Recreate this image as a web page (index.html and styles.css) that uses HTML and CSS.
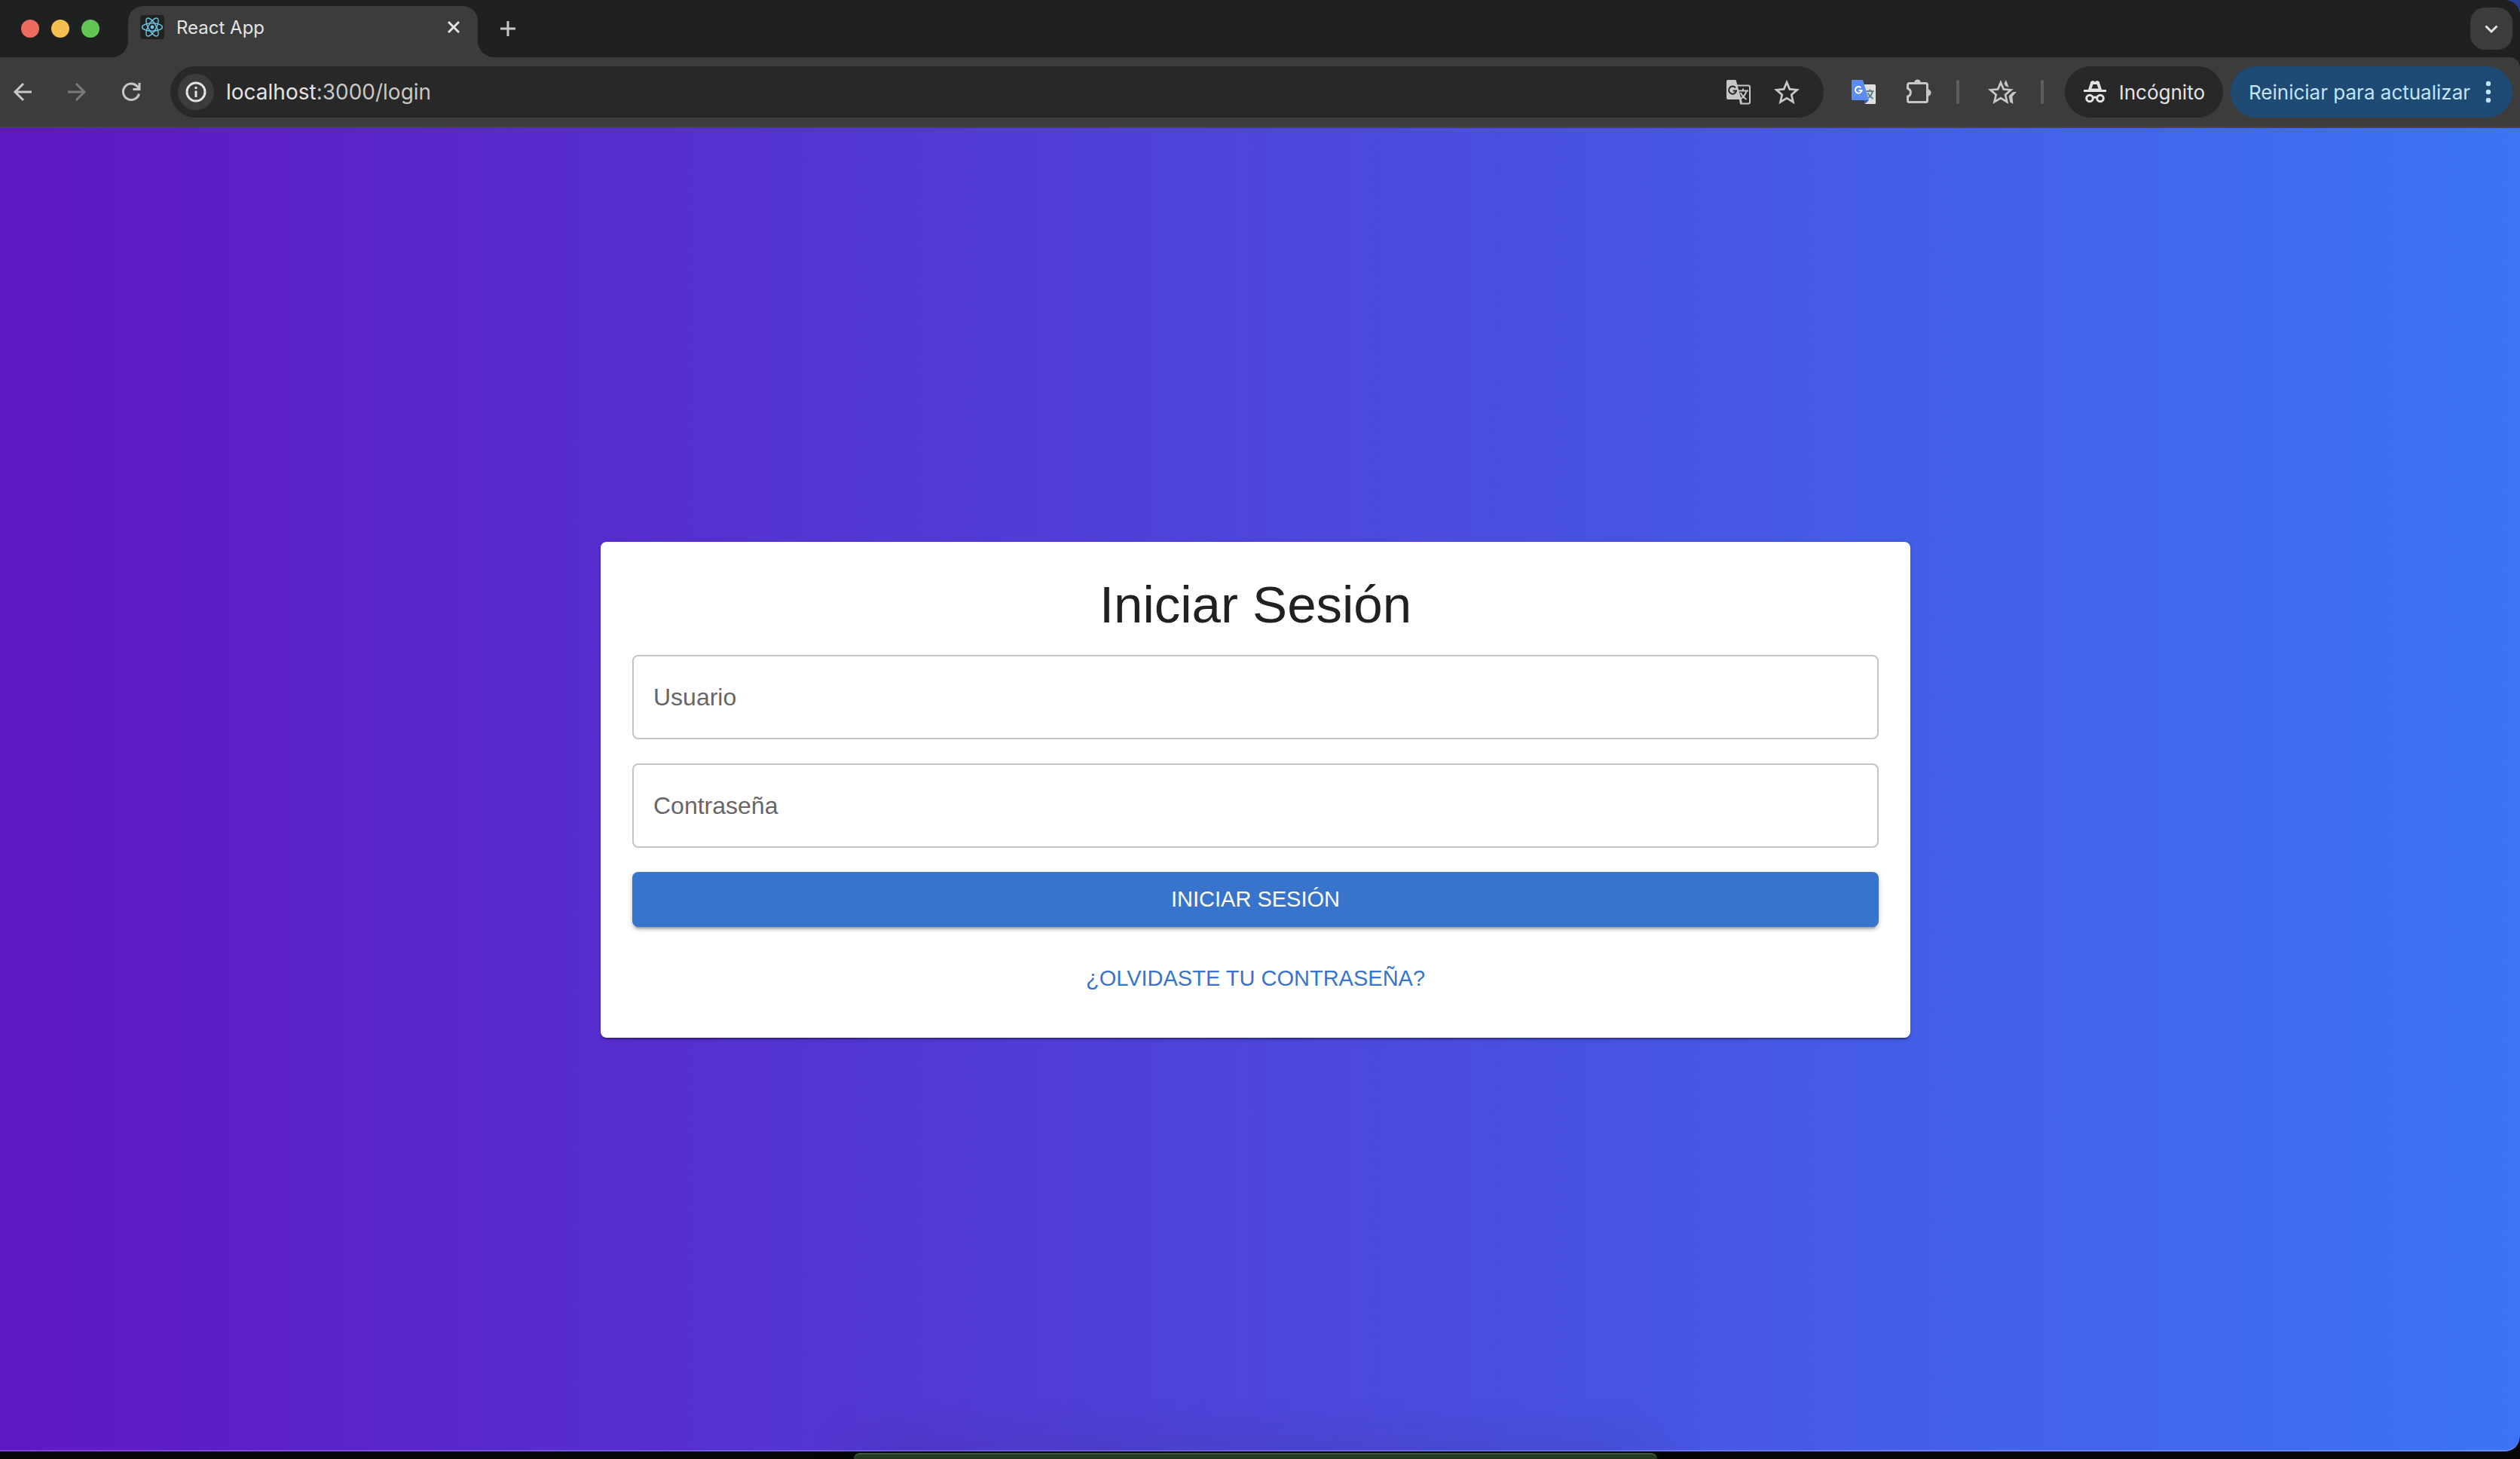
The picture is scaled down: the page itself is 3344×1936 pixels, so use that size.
FILE: index.html
```html
<!DOCTYPE html>
<html lang="es">
<head>
<meta charset="utf-8">
<title>React App</title>
<link rel="stylesheet" href="styles.css">
</head>
<body>
<div class="window">
  <header class="tabstrip">
    <div class="lights"><span class="light red"></span><span class="light yellow"></span><span class="light green"></span></div>
    <div class="tab">
      <svg class="favicon" viewBox="0 0 32 32" fill="none" stroke="#6cc7e8" stroke-width="1.4"><rect width="32" height="32" rx="4" fill="#222" stroke="none"/><ellipse cx="16" cy="16" rx="13.5" ry="5.2"/><ellipse cx="16" cy="16" rx="13.5" ry="5.2" transform="rotate(60 16 16)"/><ellipse cx="16" cy="16" rx="13.5" ry="5.2" transform="rotate(120 16 16)"/><circle cx="16" cy="16" r="2.4" fill="#6cc7e8" stroke="none"/></svg>
      <span class="tab-title">React App</span>
      <button class="plain" aria-label="Cerrar pestaña"><svg width="24" height="24" viewBox="0 0 24 24" stroke="#e3e3e3" stroke-width="3"><path d="M5 5l14 14M19 5L5 19"/></svg></button>
    </div>
    <button class="plain new-tab" aria-label="Nueva pestaña"><svg width="24" height="24" viewBox="0 0 24 24" stroke="#c7c7c7" stroke-width="3"><path d="M12 2v20M2 12h20"/></svg></button>
    <button class="tab-search" aria-label="Buscar pestañas"><svg width="24" height="24" viewBox="0 0 24 24" fill="none" stroke="#e3e3e3" stroke-width="3"><path d="M4.500 8.500l7.500 7.500 7.500-7.500"/></svg></button>
  </header>
  <div class="toolbar-frame">
  <nav class="toolbar">
    <div class="nav-buttons">
      <button class="plain" aria-label="Atrás"><svg width="32" height="32" viewBox="0 0 32 32" fill="none" stroke="#c7c7c7" stroke-width="3"><path d="M28 16H6M17 5L6 16l11 11"/></svg></button>
      <button class="plain" aria-label="Adelante"><svg width="32" height="32" viewBox="0 0 32 32" fill="none" stroke="#7b7b7b" stroke-width="3"><path d="M4 16h22M15 5l11 11-11 11"/></svg></button>
      <button class="plain" aria-label="Recargar"><svg width="32" height="32" viewBox="0 0 32 32" fill="none" stroke="#c7c7c7" stroke-width="3"><path d="M26.500 18.500A10.700 10.700 0 1 1 24 8.500l3 3.500M27 4v8.500h-8.500"/></svg></button>
    </div>
    <div class="address">
      <button class="site-info" aria-label="Información del sitio"><svg width="32" height="32" viewBox="0 0 32 32" fill="none" stroke="#e3e3e3" stroke-width="3"><circle cx="16" cy="16" r="12"/><path d="M16 14.500V23M16 9v3"/></svg></button>
      <div class="url"><span class="host">localhost</span>:3000/login</div>
      <button class="plain" aria-label="Traducir"><svg width="34" height="34" viewBox="0 0 34 34"><path d="M14 8.500h16a2 2 0 0 1 2 2v20a2 2 0 0 1-2 2H20l-1-4" fill="none" stroke="#c7c7c7" stroke-width="2"/><path d="M3 1h10.500l5 18 4 14-5-6H3a2 2 0 0 1-2-2V3a2 2 0 0 1 2-2z" fill="#c7c7c7"/><path d="M13 11.500A5 5 0 1 0 14 15.500H9.500" fill="none" stroke="#282828" stroke-width="2"/><path d="M17 15.500h13M23 12.500v3M27.500 15.500c-1 5-5 9-8 11M19.500 18c2 4 5 7 8 9" fill="none" stroke="#c7c7c7" stroke-width="2"/></svg></button>
      <button class="plain" aria-label="Añadir a marcadores"><svg width="34" height="34" viewBox="2 1.500 20 20" fill="#c7c7c7"><path d="M22 9.240l-7.190-.62L12 2 9.190 8.630 2 9.240l5.460 4.730L5.820 21 12 17.270 18.180 21l-1.630-7.030L22 9.240zM12 15.400l-3.760 2.270 1-4.280-3.320-2.880 4.380-.38L12 6.100l1.710 4.040 4.380.38-3.320 2.880 1 4.280L12 15.400z"/></svg></button>
    </div>
    <div class="extensions">
      <button class="plain" aria-label="Google Translate"><svg width="34" height="34" viewBox="0 0 34 34"><path d="M14 7h17.500a1.500 1.500 0 0 1 1.500 1.500v23a1.500 1.500 0 0 1-1.500 1.500H19z" fill="#dfdfdf"/><path d="M18 28h6l-5.500 5z" fill="#3a51bd"/><path d="M2 1h14l8 27H2a1 1 0 0 1-1-1V2a1 1 0 0 1 1-1z" fill="#5b8def"/><path d="M13.500 11.500A4.300 4.300 0 1 0 14.500 15H10.500" fill="none" stroke="#fff" stroke-width="2"/><path d="M20.500 16h10M25.500 13.500V16M29 16c-1 4-3 7-6 9M22.500 18.500c2 4 4 5.500 7 7.500" fill="none" stroke="#607d8b" stroke-width="2"/></svg></button>
      <button class="plain spaced" aria-label="Extensiones"><svg width="36" height="36" viewBox="0 0 36 36"><path d="M5.500 6.500h22a2 2 0 0 1 2 2v21a2 2 0 0 1-2 2h-22a2 2 0 0 1-2-2V24a5.500 5.500 0 0 0 0-10.500v-5a2 2 0 0 1 2-2z" fill="none" stroke="#c7c7c7" stroke-width="3"/><path d="M12 6a4.500 4.500 0 0 1 9 0zM30 14.500a4.500 4.500 0 0 1 0 9z" fill="#c7c7c7"/></svg></button>
      <span class="separator"></span>
      <button class="plain spaced" aria-label="Favoritos"><svg width="38" height="34" viewBox="2 1.500 22.500 20" fill="#c7c7c7"><path d="M22 9.240l-7.190-.62L12 2 9.190 8.630 2 9.240l5.460 4.730L5.820 21 12 17.270 18.180 21l-1.630-7.030L22 9.240zM12 15.400l-3.760 2.270 1-4.280-3.320-2.880 4.380-.38L12 6.100l1.710 4.040 4.380.38-3.320 2.880 1 4.280L12 15.400z"/><path d="M14.700 5.200L16.100 2l2.300 5.700-2.300-.7zM21.400 11.600l3.200-.3-3.400 3.800.6 5.900-2.600-1.600-.8-4.700z"/></svg></button>
      <span class="separator"></span>
    </div>
    <button class="pill incognito"><svg width="32" height="32" viewBox="0 0 32 32"><path d="M1 13h6l3.500-11 3-1 2.500 1.500L18.500 1l3 1L25 13h6v3H1z" fill="#e3e3e3"/><path d="M11.500 11.500h9L18.500 6h-5z" fill="#282828"/><g fill="none" stroke="#e3e3e3" stroke-width="3"><circle cx="9" cy="24.500" r="4.300"/><circle cx="23" cy="24.500" r="4.300"/><path d="M13 24q3-2 6 0"/></g></svg>Incógnito</button>
    <button class="pill update">Reiniciar para actualizar<svg width="8" height="32" viewBox="0 0 8 32" fill="#c2e3fb"><circle cx="4" cy="5" r="3.200"/><circle cx="4" cy="16" r="3.200"/><circle cx="4" cy="27" r="3.200"/></svg></button>
  </nav>
  </div>
  <main class="page">
    <form class="card">
      <h1>Iniciar Sesión</h1>
      <div class="field"><label for="user">Usuario</label><input id="user" type="text"></div>
      <div class="field"><label for="password">Contraseña</label><input id="password" type="password"></div>
      <button class="submit" type="submit">INICIAR SESIÓN</button>
      <a class="forgot" href="#">¿OLVIDASTE TU CONTRASEÑA?</a>
    </form>
  </main>
</div>
<div class="dock"></div>
</body>
</html>
```
FILE: styles.css
```css
* { box-sizing: border-box; }
body {
  margin: 0;
  height: 100vh;
  display: flex;
  flex-direction: column;
  gap: 2px;
  overflow: hidden;
  background: linear-gradient(#26408f 0 20px, #050605 20px);
  font-family: Inter, Roboto, "Liberation Sans", sans-serif;
}
button { margin: 0; border: 0; padding: 0; font: inherit; color: inherit; }
svg { display: block; flex: none; }
.plain { background: none; }
.window {
  flex: 1;
  display: flex;
  flex-direction: column;
  border-radius: 0 20px 20px 0;
  overflow: hidden;
}
.tabstrip {
  height: 76px;
  display: flex;
  align-items: center;
  padding: 0 10px 0 28px;
  background: #1f2120;
}
.lights { display: flex; gap: 16px; width: 142px; }
.light { width: 24px; height: 24px; border-radius: 50%; }
.red { background: #ed6a5e; }
.yellow { background: #f5bf4f; }
.green { background: #61c554; }
.tab {
  position: relative;
  align-self: flex-end;
  display: flex;
  align-items: center;
  gap: 16px;
  width: 464px;
  height: 68px;
  padding: 0 20px 12px 16px;
  border-radius: 20px 20px 0 0;
  background: #3c3c3c;
}
.tab::before, .tab::after {
  content: "";
  position: absolute;
  bottom: 0;
  width: 22px;
  height: 22px;
}
.tab::before { right: 100%; background: radial-gradient(circle at 0 0, transparent 22px, #3c3c3c 22px); }
.tab::after { left: 100%; background: radial-gradient(circle at 100% 0, transparent 22px, #3c3c3c 22px); }
.favicon { width: 32px; height: 32px; }
.tab-title { flex: 1; font-size: 24px; color: #e3e3e3; }
.new-tab { margin-left: 28px; }
.tab-search {
  display: grid;
  place-items: center;
  width: 56px;
  height: 56px;
  margin-left: auto;
  border-radius: 20px;
  background: #3c3c3c;
}
.toolbar-frame { background: #1f2120; }
.toolbar {
  height: 94px;
  display: flex;
  align-items: center;
  gap: 10px;
  padding: 0 10px 0 14px;
  border-bottom: 2px solid #464646;
  border-radius: 0 14px 0 0;
  background: #3c3c3c;
  font-size: 26px;
}
.nav-buttons { display: flex; gap: 40px; width: 202px; }
.address {
  flex: 1;
  display: flex;
  align-items: center;
  gap: 30px;
  height: 68px;
  padding: 0 32px 0 10px;
  border-radius: 34px;
  background: #282828;
}
.site-info {
  display: grid;
  place-items: center;
  width: 48px;
  height: 48px;
  margin-right: -14px;
  border-radius: 50%;
  background: #3c3c3c;
}
.url { flex: 1; font-size: 28px; color: #c7c7c7; }
.host { color: #e3e3e3; }
.extensions { display: flex; align-items: center; gap: 32px; margin: 0 18px 0 26px; }
.spaced { margin-left: 6px; }
.separator { width: 4px; height: 32px; border-radius: 2px; background: #5e5e5e; }
.pill {
  display: flex;
  align-items: center;
  justify-content: space-between;
  height: 68px;
  border-radius: 34px;
}
.incognito { width: 210px; padding: 0 24px; color: #e3e3e3; background: #282828; }
.update { width: 374px; padding: 0 28px 0 24px; color: #c2e3fb; background: #1f4a73; }
.page {
  flex: 1;
  display: flex;
  align-items: center;
  justify-content: center;
  padding: 2px 12px 0 0;
  border-bottom: 2px solid rgba(255, 255, 255, 0.2);
  border-radius: 0 0 20px 0;
  background: linear-gradient(90deg, #5f17c1, #3c74f4);
  font-family: "Liberation Sans", Arial, sans-serif;
}
.card {
  display: flex;
  flex-direction: column;
  width: 100%;
  max-width: 1738px;
  padding: 42px 42px 54px;
  border-radius: 8px;
  background: #fff;
  box-shadow: 0 4px 2px -2px rgba(0, 0, 0, 0.2), 0 2px 2px rgba(0, 0, 0, 0.14), 0 2px 6px rgba(0, 0, 0, 0.12);
}
h1 {
  margin: 0 0 24px;
  font-size: 69px;
  font-weight: 400;
  line-height: 84px;
  text-align: center;
  color: #212121;
}
.field { display: grid; margin-bottom: 32px; }
.field label, .field input { grid-area: 1 / 1; }
.field label {
  z-index: 1;
  align-self: center;
  justify-self: start;
  padding-left: 28px;
  font-size: 32px;
  color: #666;
}
.field input {
  width: 100%;
  height: 112px;
  padding: 0 28px;
  border: 2px solid #c4c4c4;
  border-radius: 8px;
  background: transparent;
  font: inherit;
  font-size: 32px;
}
.submit {
  height: 73px;
  border-radius: 8px;
  background: #3874cb;
  font-size: 29px;
  color: #fff;
  box-shadow: 0 6px 2px -4px rgba(0, 0, 0, 0.2), 0 4px 4px rgba(0, 0, 0, 0.14), 0 2px 10px rgba(0, 0, 0, 0.12);
}
.forgot {
  align-self: center;
  margin-top: 44px;
  font-size: 29px;
  line-height: 49px;
  color: #3874cb;
  text-decoration: none;
}
.dock {
  z-index: 1;
  align-self: center;
  width: 1066px;
  height: 8px;
  margin-right: 12px;
  border-top: 2px solid #3f5b3a;
  border-radius: 20px 20px 0 0;
  background: #243b1f;
  box-shadow: 0 0 60px rgba(30, 30, 40, 0.6);
}
```
